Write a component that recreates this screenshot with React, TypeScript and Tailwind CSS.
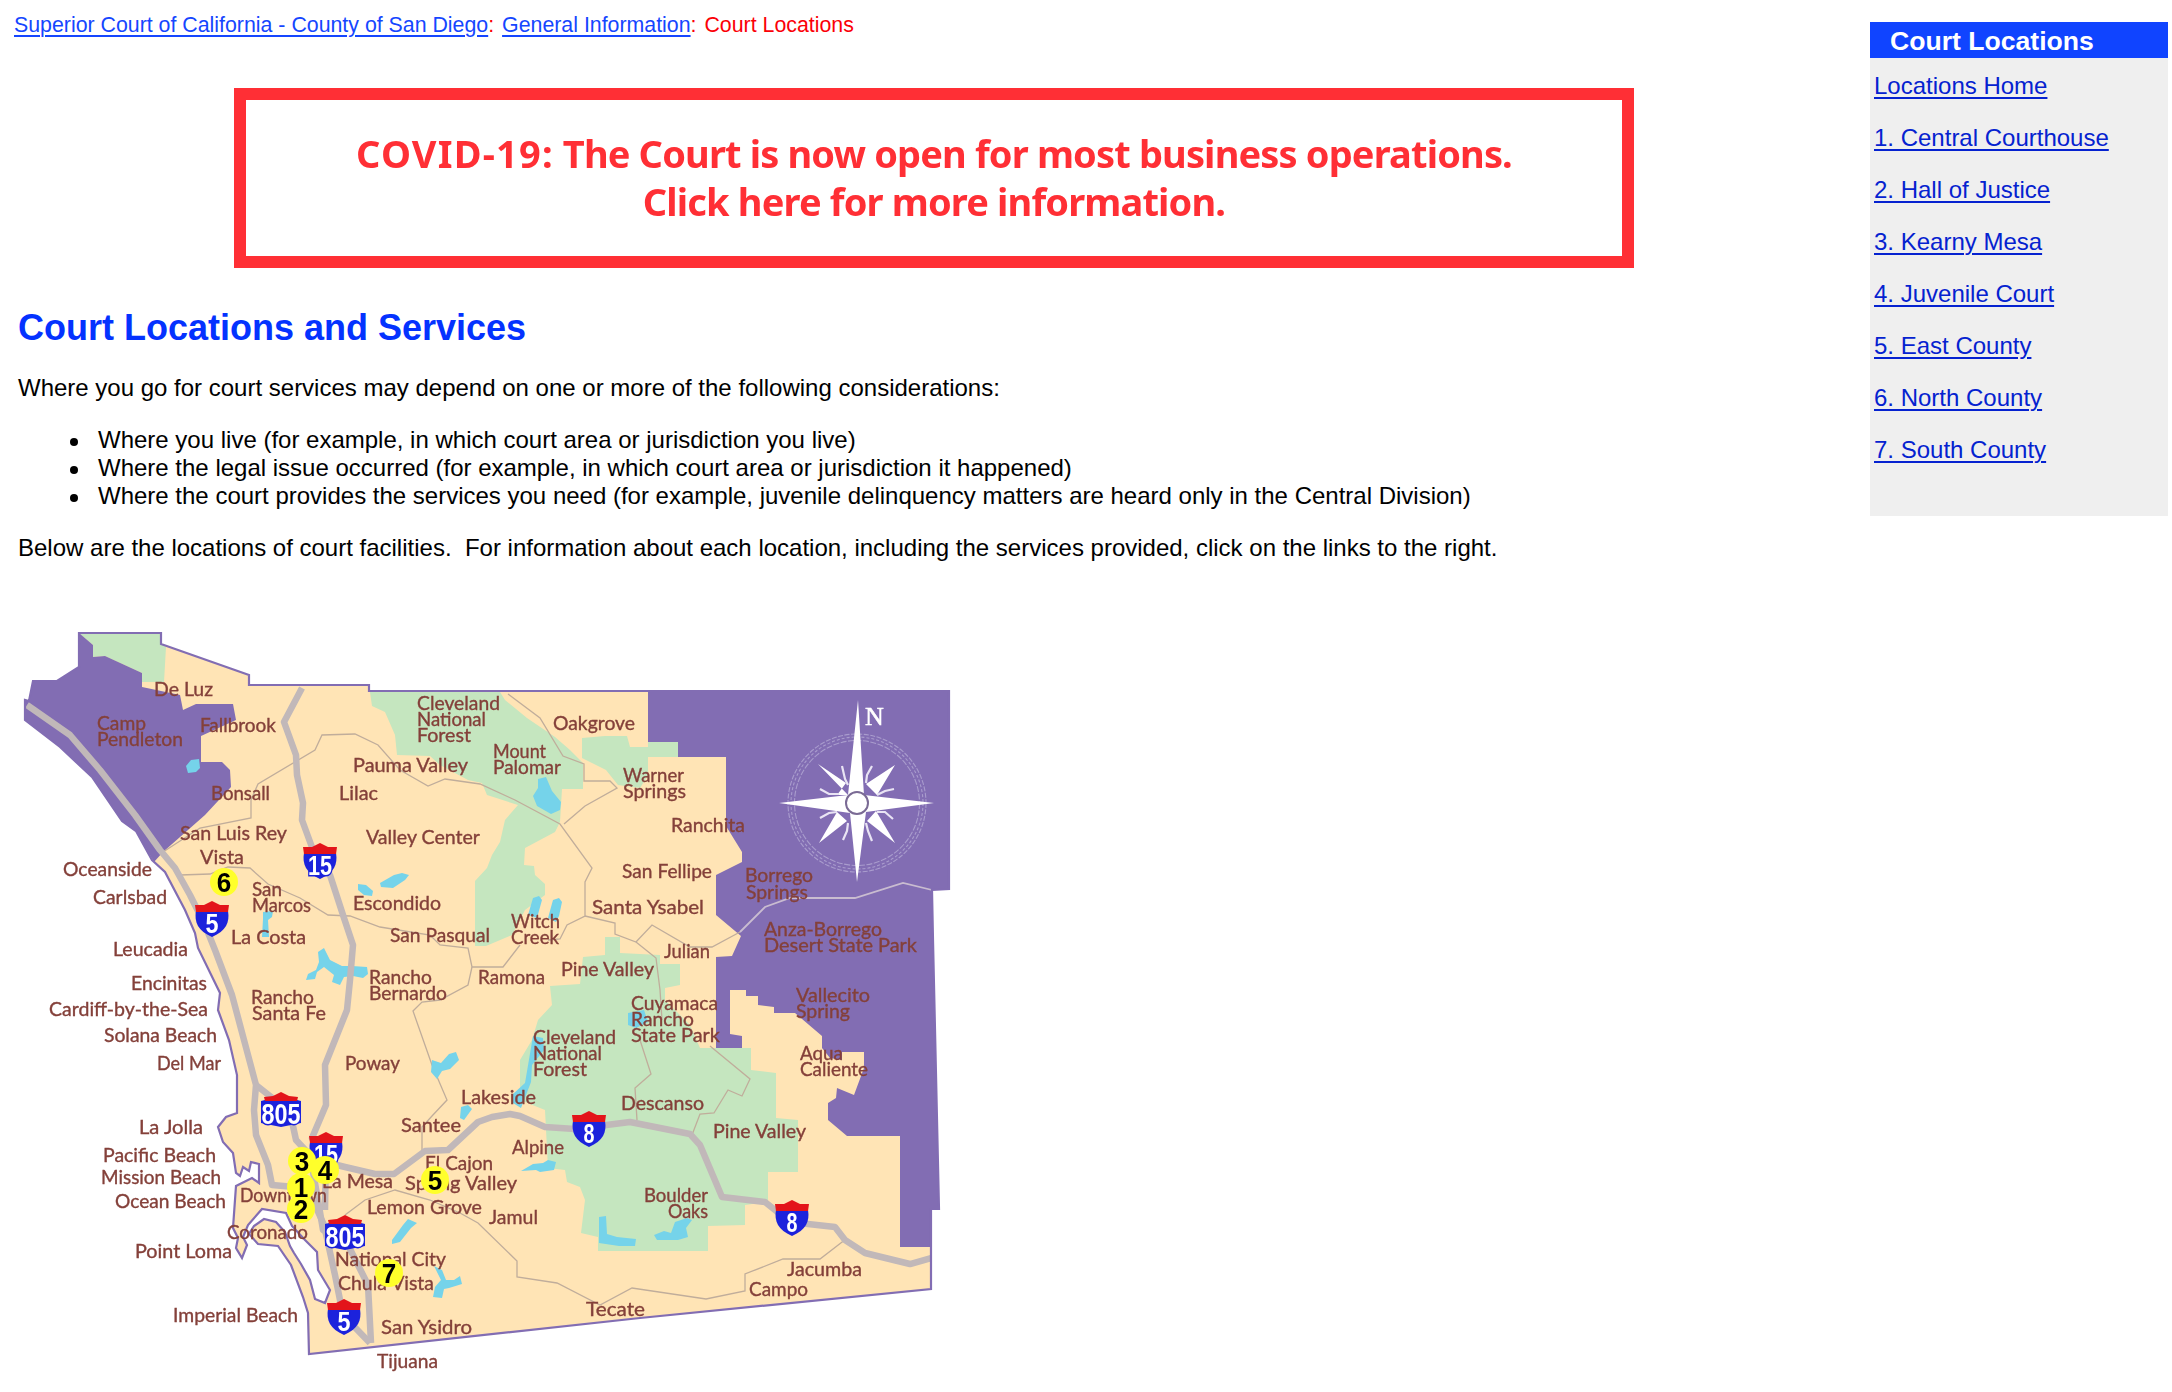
import React from "react";

type Label = [text: string, x: number, baseline: number, width: number];

const labels: Label[] = [
  ["De Luz", 154, 695, 59],
  ["Fallbrook", 200, 731, 76],
  ["Camp", 97, 729, 49],
  ["Pendleton", 97, 745, 86],
  ["Bonsall", 211, 799, 59],
  ["San Luis Rey", 180, 839, 107],
  ["Vista", 200, 863, 44],
  ["Oceanside", 63, 875, 89],
  ["Carlsbad", 93, 903, 74],
  ["Leucadia", 113, 955, 75],
  ["Encinitas", 131, 989, 76],
  ["Cardiff-by-the-Sea", 49, 1015, 159],
  ["Solana Beach", 104, 1041, 113],
  ["Del Mar", 157, 1069, 64],
  ["San", 252, 895, 30],
  ["Marcos", 252, 911, 59],
  ["La Costa", 231, 943, 75],
  ["Rancho", 251, 1003, 63],
  ["Santa Fe", 252, 1019, 74],
  ["Cleveland", 417, 709, 83],
  ["National", 417, 725, 69],
  ["Forest", 417, 741, 54],
  ["Oakgrove", 553, 729, 82],
  ["Mount", 493, 757, 53],
  ["Palomar", 493, 773, 68],
  ["Pauma Valley", 353, 771, 115],
  ["Lilac", 339, 799, 39],
  ["Valley Center", 366, 843, 114],
  ["Warner", 623, 781, 61],
  ["Springs", 623, 797, 63],
  ["Ranchita", 671, 831, 74],
  ["San Fellipe", 622, 877, 90],
  ["Borrego", 745, 881, 68],
  ["Springs", 746, 898, 62],
  ["Santa Ysabel", 592, 913, 112],
  ["Anza-Borrego", 764, 935, 118],
  ["Desert State Park", 764, 951, 153],
  ["Julian", 664, 957, 46],
  ["Escondido", 353, 909, 88],
  ["San Pasqual", 390, 941, 100],
  ["Witch", 511, 927, 49],
  ["Creek", 511, 943, 48],
  ["Rancho", 369, 983, 63],
  ["Bernardo", 369, 999, 78],
  ["Ramona", 478, 983, 67],
  ["Pine Valley", 561, 975, 93],
  ["Cuyamaca", 631, 1009, 87],
  ["Rancho", 631, 1025, 63],
  ["State Park", 631, 1041, 89],
  ["Vallecito", 796, 1001, 74],
  ["Spring", 796, 1017, 54],
  ["Aqua", 800, 1059, 43],
  ["Caliente", 800, 1075, 68],
  ["Cleveland", 533, 1043, 83],
  ["National", 533, 1059, 69],
  ["Forest", 533, 1075, 54],
  ["Poway", 345, 1069, 55],
  ["Lakeside", 461, 1103, 75],
  ["Descanso", 621, 1109, 83],
  ["Santee", 401, 1131, 60],
  ["Pine Valley", 713, 1137, 93],
  ["Alpine", 512, 1153, 52],
  ["El Cajon", 425, 1169, 68],
  ["La Mesa", 322, 1187, 71],
  ["Spring Valley", 405, 1189, 112],
  ["Lemon Grove", 367, 1213, 115],
  ["Jamul", 489, 1223, 49],
  ["Boulder", 644, 1201, 64],
  ["Oaks", 668, 1217, 40],
  ["La Jolla", 139, 1133, 64],
  ["Pacific Beach", 103, 1161, 113],
  ["Mission Beach", 101, 1183, 120],
  ["Ocean Beach", 115, 1207, 111],
  ["Downtown", 240, 1201, 87],
  ["Coronado", 227, 1238, 81],
  ["Point Loma", 135, 1257, 97],
  ["Imperial Beach", 173, 1321, 125],
  ["National City", 335, 1265, 111],
  ["Chula Vista", 338, 1289, 96],
  ["San Ysidro", 381, 1333, 91],
  ["Tijuana", 377, 1367, 61],
  ["Tecate", 586, 1315, 59],
  ["Campo", 749, 1295, 59],
  ["Jacumba", 787, 1275, 75],
];

const shields: [string, number, number][] = [
  ["15", 320, 861],
  ["5", 212, 919],
  ["805", 281, 1110],
  ["15", 326, 1150],
  ["8", 589, 1129],
  ["805", 345, 1233],
  ["8", 792, 1218],
  ["5", 344, 1317],
];

const pins: [string, number, number][] = [
  ["6", 224, 882],
  ["3", 302, 1161],
  ["4", 325, 1170],
  ["1", 301, 1187],
  ["2", 301, 1209],
  ["5", 435, 1180],
  ["7", 389, 1273],
];

const county =
  "79,633 161,633 161,644 249,675 249,685 369,685 369,691 949,691 949,889 932,890 933,940 939,1209 931,1209 931,1289 640,1318 309,1354 308,1313 303,1297 291,1265 278,1246 258,1244 249,1234 254,1226 264,1219 276,1222 285,1232 290,1246 294,1253 301,1264 310,1280 315,1299 325,1303 330,1290 318,1270 317,1252 305,1240 292,1226 286,1213 262,1209 248,1225 243,1237 247,1245 242,1258 236,1248 238,1238 233,1228 236,1186 252,1178 259,1183 259,1164 251,1162 249,1171 243,1167 240,1176 236,1173 233,1153 223,1142 218,1127 226,1117 237,1113 237,1075 229,1040 218,1010 220,993 198,948 195,933 185,910 165,872 152,860 136,831 122,821 92,777 60,747 25,720 25,700 29,701 33,681 57,681 79,667";

const greens = [
  "80,634 161,634 161,644 166,647 164,682 142,682 142,673 105,656 93,657 93,645",
  "370,692 372,706 385,712 395,735 397,755 430,756 440,765 468,780 482,783 487,795 518,805 505,820 500,842 492,855 487,868 475,881 475,946 486,946 512,935 525,910 545,895 545,884 535,875 534,866 524,865 525,848 555,832 560,822 562,789 583,789 583,763 570,750 555,737 527,718 505,700 500,692",
  "582,738 605,736 627,736 630,747 648,747 648,742 678,742 678,757 648,757 648,775 640,788 618,785 606,770 582,758",
  "583,957 605,955 605,937 620,937 620,953 660,955 660,964 680,964 680,985 665,988 665,1000 690,1025 700,1048 751,1048 751,1070 776,1073 776,1118 798,1120 798,1172 768,1172 768,1202 745,1205 745,1225 708,1226 708,1251 598,1251 598,1237 581,1233 585,1200 580,1187 567,1182 565,1170 548,1168 545,1110 520,1100 520,1060 532,1040 538,1020 552,1005 550,986 580,984",
];

const purples = [
  "79,633 93,645 93,657 105,656 142,673 142,687 180,695 183,710 196,704 233,704 236,720 201,736 201,762 222,762 230,770 231,787 205,815 163,852 154,862 136,831 122,821 92,777 60,747 25,720 25,700 29,701 33,681 57,681 79,667",
  "648,691 648,742 678,742 678,757 726,757 726,826 742,852 742,862 716,875 716,915 741,936 732,956 716,957 716,1048 742,1048 742,1036 730,1034 730,990 746,990 746,996 758,996 758,1005 774,1007 774,1013 795,1013 822,1036 822,1048 830,1058 842,1060 842,1052 864,1052 864,1068 854,1095 837,1088 836,1098 828,1103 828,1120 847,1136 900,1136 900,1247 931,1247 931,1209 939,1209 933,940 932,890 949,890 949,691",
];

const lakes = [
  "M186 766l5-6 8-1 1 9-4 4-8 1z",
  "M538 779l8-2 6 14 9 11-1 8-9 4-14-8-4-10 5-8z",
  "M358 884l8 1 7 6-1 5-8-1-6-5z",
  "M380 883l14-8 8-2 7 2-4 5-12 8-12-1z",
  "M263 912l10-1-1 6-4 3 1 17h-7l1-18z",
  "M528 915l5-17 6-2 3 4-5 18zM548 918l5-18 6-2 3 4-3 14-3 6z",
  "M318 952l6-4 6 12 12 6h10l15 1 1 7-5 4-10-2-9 1-4 8-8-3 2-7-10-8-7 5-2 7-9 1 2-6 8-4 3-8z",
  "M432 1060l9 3 8-9 7-2 3 8-9 9-8 2-5 8-6-7z",
  "M533 1036l10 2 1 12-12 15-1 17-10 26-8-5v-9l12-11z",
  "M461 1107l7-2 4 4-8 11-4-2z",
  "M628 1013l16-3 4 12-12 6-8-3z",
  "M521 1171l12-7 10-1 5-3 8 2-2 8-14 2-4-2z",
  "M392 1240l11-15 5-6 9 4-6 5-11 14-8 2z",
  "M434 1266l8 4 4 10 8 0 6-4 2 8-13 4-5 1-2 9-9-1 2-10 6-7z",
  "M599 1217l7-1 1 18 10 3 19 2-1 7-16 0-20-3z",
  "M654 1235l10-4 7 2 4-11 12-4 5 2-6 8 2 9-10 3-21 0z",
];

const highways = [
  "27,705 70,735 100,770 135,815 160,850 175,868 190,895 205,925 215,950 232,995 248,1055 256,1085 254,1110 256,1135 268,1165 272,1185 295,1187 315,1205 324,1225 335,1275 343,1315 370,1343",
  "302,688 284,722 296,755 297,775 303,803 302,820 313,850 330,875 343,915 353,945 350,980 347,1010 325,1065 326,1105 312,1138 326,1150 325,1210",
  "256,1085 290,1112 296,1140 310,1155 318,1200 323,1230 348,1245 368,1285 371,1343",
  "325,1162 345,1167 375,1174 394,1174 425,1151 448,1150 478,1122 492,1117 510,1114 520,1116 545,1127 575,1129 630,1122 690,1134 700,1145 722,1197 765,1202 790,1222 835,1227 845,1240 865,1253 910,1264 931,1258",
];

const roads = [
  "163,852 200,828 251,818 251,800 258,784 315,750 322,735 355,734 378,745 400,770 428,786 445,779 480,784 515,800 560,824 592,868 585,882 585,916 567,925 560,939 548,940",
  "508,694 540,718 563,756 584,764 584,781 610,781 617,788 585,806 564,824",
  "180,875 210,874 228,867 250,868 268,884 300,898 328,915 350,916 380,927 430,935 440,945 468,948 472,967 503,967 520,945",
  "585,916 615,923 615,934 636,942 652,925 690,947 712,947 740,932",
  "636,942 656,958 660,990 662,1020",
  "472,967 468,985 440,1000 422,1002 413,1011 432,1065 447,1100 432,1116 422,1127 422,1150",
  "640,1040 651,1074 635,1088 637,1120",
  "710,1046 750,1079 742,1096 728,1090 714,1113 700,1114 692,1135",
  "345,1215 365,1200 395,1190 430,1200 460,1213 478,1223 517,1261 517,1277 557,1283 600,1305 632,1288 706,1299 745,1291 745,1274 783,1259 820,1259 846,1239",
];

const desertRoad = "740,932 765,907 790,898 855,898 903,883 932,890";

const digitWidth: Record<string, number> = { "5": 13, "8": 11, "15": 24, "805": 39 };

function Shield({ text, x, y }: { text: string; x: number; y: number }) {
  const wide = text.length === 3;
  return (
    <g transform={`translate(${x} ${y})`}>
      <path
        d={
          wide
            ? "M-16 -10H16L20 -9V13L10 15L0 17L-10 15L-20 13V-9Z"
            : "M-16 -8C-18 3 -14 12 0 18C14 12 18 3 16 -8Z"
        }
        fill="#1c22dc"
      />
      <path
        d={wide ? "M-16 -9L-17 -13L-8 -14L0 -18L8 -14L17 -13L16 -9Z" : "M-16 -7L-17 -14L-8 -14L0 -18L8 -14L17 -14L16 -7Z"}
        fill="#e3141a"
      />
      <text
        x={0}
        y={14}
        textAnchor="middle"
        fontSize={wide ? 29 : 27}
        fontWeight="700"
        textLength={digitWidth[text]}
        lengthAdjust="spacingAndGlyphs"
        fill="#fff"
        stroke="#1c22dc"
        strokeWidth="3"
        paintOrder="stroke"
        className="font-['Liberation_Sans',sans-serif]"
      >
        {text}
      </text>
    </g>
  );
}

function Compass() {
  return (
    <g transform="translate(857 803)">
      <g fill="none" stroke="#a99ccd" strokeWidth="1.1">
        <circle r="69" strokeDasharray="5 1.5" />
        <circle r="66" strokeDasharray="3 2" />
        <circle r="62.5" strokeDasharray="6 1.5" />
      </g>
      <g fill="#fff">
        <path d="M1 -103L7 -8L77 0L9 9L0 79L-7 10L-78 0L-9 -8Z" />
        <path d="M-39 -39L-11 -20L-20 -8L-9 -8ZM38 -38L9 -19L20 -8ZM38 40L10 18L19 8ZM-38 40L-10 18L-20 9Z" />
      </g>
      <path
        d="M-15 -37L-12 -24L-9 -18M15 -37L10 -28L9 -20M-37 -14L-28 -9L-18 -9M37 -14L28 -12L20 -8M-37 15L-28 10L-20 9M36 16L28 9L20 9M-14 37L-10 28L-9 20M15 38L11 28L9 20"
        fill="none"
        stroke="#e9e4f4"
        strokeWidth="2.2"
      />
      <circle r="11" fill="#fff" stroke="#7a6a94" strokeWidth="2" />
      <text
        x="8"
        y="-78"
        fontSize="26"
        fill="#fff"
        stroke="#fff"
        strokeWidth="0.5"
        className="font-['Liberation_Serif',serif]"
      >
        N
      </text>
    </g>
  );
}

function CountyMap() {
  return (
    <svg
      viewBox="0 620 980 772"
      className="block h-[772px] w-[980px] shrink-0 blur-[0.6px]"
      role="img"
      aria-label="Map of San Diego County"
    >
      <polygon points={county} fill="#ffe4b5" />
      {greens.map((p) => (
        <polygon key={p} points={p} fill="#c5e6bf" />
      ))}
      {purples.map((p) => (
        <polygon key={p} points={p} fill="#826db3" />
      ))}
      <g fill="none" stroke="#c0ad9b" strokeWidth="1.3">
        {roads.map((p) => (
          <polyline key={p} points={p} />
        ))}
      </g>
      <polyline points={desertRoad} fill="none" stroke="#c9bcd0" strokeWidth="1.8" />
      {lakes.map((d) => (
        <path key={d} d={d} fill="#75d3ea" />
      ))}
      <g fill="none" stroke="#c1b8b9" strokeWidth="6.5" strokeLinejoin="round">
        {highways.map((p) => (
          <polyline key={p} points={p} />
        ))}
      </g>
      <polygon points={county} fill="none" stroke="#826db3" strokeWidth="2.2" />
      <Compass />
      <g fontSize="18.5" fill="#84403a" stroke="#84403a" strokeWidth="0.35" className="font-['Lato',sans-serif]">
        {labels.map(([text, x, y, width]) => (
          <text key={`${text}-${x}-${y}`} x={x} y={y + 0.7} textLength={width} lengthAdjust="spacingAndGlyphs">
            {text}
          </text>
        ))}
      </g>
      {shields.map(([text, x, y]) => (
        <Shield key={`${text}-${x}`} text={text} x={x} y={y} />
      ))}
      {pins.map(([, x, y]) => (
        <circle key={`${x}-${y}`} cx={x} cy={y} r="14" fill="#ffff2b" />
      ))}
      {pins.map(([text, x, y]) => (
        <text
          key={text}
          x={x}
          y={y + 10}
          textAnchor="middle"
          fontSize="28"
          fontWeight="700"
          textLength="14.5"
          lengthAdjust="spacingAndGlyphs"
          className="font-['Liberation_Sans',sans-serif]"
        >
          {text}
        </text>
      ))}
    </svg>
  );
}

const link = "underline decoration-2 underline-offset-[3px] [text-decoration-skip-ink:auto]";

const considerations = [
  "Where you live (for example, in which court area or jurisdiction you live)",
  "Where the legal issue occurred (for example, in which court area or jurisdiction it happened)",
  "Where the court provides the services you need (for example, juvenile delinquency matters are heard only in the Central Division)",
];

const locations = [
  "Locations Home",
  "1. Central Courthouse",
  "2. Hall of Justice",
  "3. Kearny Mesa",
  "4. Juvenile Court",
  "5. East County",
  "6. North County",
  "7. South County",
];

export default function App() {
  return (
    <div className="flex h-[1392px] w-[2172px] items-start overflow-hidden bg-white font-['Liberation_Sans',Arial,sans-serif] text-[24px] leading-[28px] text-black">
      <main className="flex w-[1870px] shrink-0 flex-col">
        <nav className="mt-[12px] ml-[14px] h-[26px] text-[21.33px] leading-[26px] whitespace-nowrap text-[#fb0007]">
          <a href="#" className={`${link} text-[#1546ff]`}>
            Superior Court of California - County of San Diego
          </a>
          :{" "}
          <a href="#" className={`${link} ml-[2px] text-[#1546ff]`}>
            General Information
          </a>
          : <span className="ml-[2px]">Court Locations</span>
        </nav>

        <a
          href="#"
          className="mt-[50px] ml-[234px] flex h-[180px] w-[1400px] flex-col items-center border-[12px] border-[#ff2f35] pt-[29px] font-['Noto_Sans',sans-serif] text-[38px] leading-[48px] font-bold tracking-[-0.85px] whitespace-nowrap text-[#ff2f35]"
        >
          <span className="blur-[0.6px]">
            <span className="tracking-[1.2px]">COVID-19:</span> The Court is now open for most business operations.
          </span>
          <span className="blur-[0.6px]">Click here for more information.</span>
        </a>

        <div className="ml-[18px] whitespace-nowrap">
          <h1 className="mt-[39px] text-[36px] leading-[42px] font-bold text-[#0432ff]">Court Locations and Services</h1>
          <p className="mt-[25px]">
            Where you go for court services may depend on one or more of the following considerations:
          </p>
          <ul className="mt-[24px] pl-[52px]">
            {considerations.map((text) => (
              <li key={text} className="flex">
                <span className="mt-[12px] mr-[20px] size-[8px] shrink-0 rounded-full bg-black" />
                {text}
              </li>
            ))}
          </ul>
          <p className="mt-[24px]">
            Below are the locations of court facilities.&nbsp; For information about each location, including the
            services provided, click on the links to the right.
          </p>
        </div>

        <div className="mt-[58px]">
          <CountyMap />
        </div>
      </main>

      <aside className="mt-[22px] h-[494px] w-[298px] shrink-0 bg-[#efefef]">
        <h2 className="h-[36px] bg-[#1044ff] pl-[20px] text-[26.6px] leading-[38px] font-bold text-white">
          Court Locations
        </h2>
        <ul className="flex flex-col gap-[24px] pt-[14px] pl-[4px] whitespace-nowrap">
          {locations.map((name) => (
            <li key={name}>
              <a href="#" className={`${link} text-[#0522d0]`}>
                {name}
              </a>
            </li>
          ))}
        </ul>
      </aside>
    </div>
  );
}
